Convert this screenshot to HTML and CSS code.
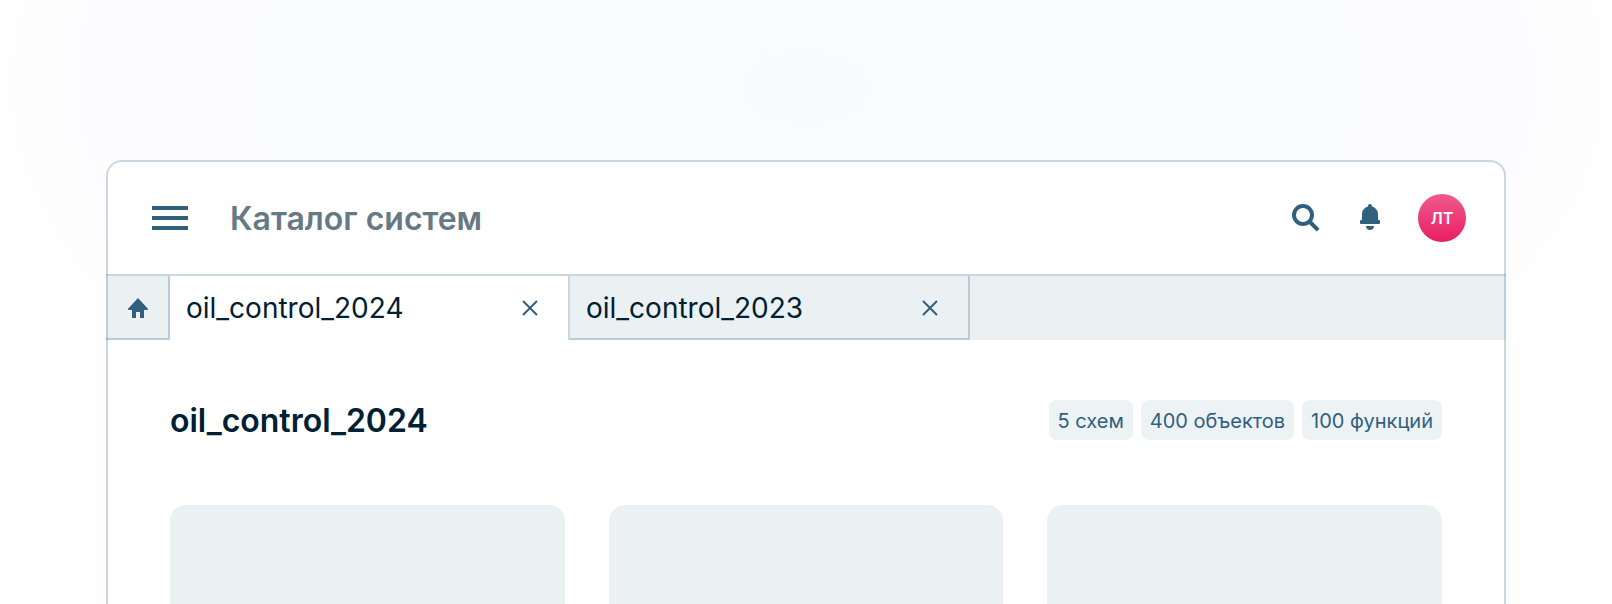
FILE: index.html
```html
<!DOCTYPE html>
<html lang="ru">
<head>
<meta charset="utf-8">
<meta name="viewport" content="width=device-width, initial-scale=1">
<title>Каталог систем</title>
<link rel="stylesheet" href="styles.css">
</head>
<body>
<div class="window">
  <header class="header">
    <button class="icon-button" type="button" aria-label="Меню">
      <svg width="36" height="24" viewBox="0 0 36 24" fill="currentColor"><path d="M0 0h36v4H0zM0 10h36v4H0zM0 20h36v4H0z"/></svg>
    </button>
    <h1 class="title">Каталог систем</h1>
    <div class="actions">
      <button class="icon-button" type="button" aria-label="Поиск">
        <svg width="30" height="28" viewBox="0 0 30 28" fill="none" stroke="currentColor" stroke-width="4"><circle cx="11" cy="11" r="9"/><path d="M17.500 17.500l8.600 8.600"/></svg>
      </button>
      <button class="icon-button" type="button" aria-label="Уведомления">
        <svg width="20" height="28" viewBox="0 0 20 28" fill="currentColor"><path d="M10 0c1.200 0 2 .8 2 2v.4c3.500 1 6 4 6 7.600v6h.7c.8 0 1.300.5 1.300 1.200v1.500c0 .8-.5 1.300-1.300 1.300H1.300C.5 20 0 19.500 0 18.700v-1.500C0 16.500.5 16 1.300 16H2v-6c0-3.600 2.500-6.600 6-7.600V2c0-1.200.8-2 2-2zM6 22h8c0 2.400-1.700 4-4 4s-4-1.600-4-4z"/></svg>
      </button>
      <button class="avatar" type="button">ЛТ</button>
    </div>
  </header>
  <nav class="tabs">
    <button class="home" type="button" aria-label="Главная">
      <svg width="20" height="20" viewBox="0 0 20 20" fill="currentColor"><path d="M10 0l9.700 10.400c.6.700.2 1.600-.6 1.600H16v8h-4v-6H8v6H4v-8H.9c-.8 0-1.200-.9-.6-1.600z"/></svg>
    </button>
    <div class="tab tab-active">
      <a class="tab-link" href="#2024">oil_control_2024</a>
      <button class="icon-button" type="button" aria-label="Закрыть oil_control_2024">
        <svg width="16" height="16" viewBox="0 0 16 16" stroke="currentColor" stroke-width="2"><path d="M1 1l14 14M15 1L1 15"/></svg>
      </button>
    </div>
    <div class="tab">
      <a class="tab-link" href="#2023">oil_control_2023</a>
      <button class="icon-button" type="button" aria-label="Закрыть oil_control_2023">
        <svg width="16" height="16" viewBox="0 0 16 16" stroke="currentColor" stroke-width="2"><path d="M1 1l14 14M15 1L1 15"/></svg>
      </button>
    </div>
    <div class="tabs-rest"></div>
  </nav>
  <main class="content" id="2024">
    <div class="summary">
      <h2 class="name">oil_control_2024</h2>
      <div class="tags">
        <span class="tag">5 схем</span>
        <span class="tag">400 объектов</span>
        <span class="tag">100 функций</span>
      </div>
    </div>
    <div class="cards">
      <div class="card"></div>
      <div class="card"></div>
      <div class="card"></div>
    </div>
  </main>
</div>
</body>
</html>
```

FILE: styles.css
```css
* {
  box-sizing: border-box;
}

body {
  --accent: #30607e;
  --line: rgba(48, 96, 126, 0.25);
  --fill: rgba(55, 105, 135, 0.1);
  display: flex;
  flex-direction: column;
  height: 100vh;
  margin: 0;
  padding: 160px 106px 0;
  overflow: hidden;
  background: radial-gradient(ellipse 54% 80% at 50% 14%, #f9fafb 0%, #fafbfc 40%, #fcfcfe 75%, #fefefe 100%);
  color: #002033;
  font-family: Inter, "Liberation Sans", sans-serif;
}

button {
  padding: 0;
  border: 0;
  background: none;
  color: var(--accent);
  font: inherit;
  cursor: pointer;
}

svg {
  display: block;
}

.window {
  display: flex;
  flex: 1;
  flex-direction: column;
  border: 2px solid #cbd8e1;
  border-bottom: 0;
  border-radius: 16px 16px 0 0;
  background: #fff;
  background-clip: padding-box;
}

.header {
  display: flex;
  align-items: center;
  margin: 0 -2px;
  padding: 32px 40px 32px 46px;
  border-bottom: 2px solid var(--line);
}

.title {
  margin: 0 0 0 42px;
  padding-top: 2px;
  color: #667985;
  font-size: 32px;
  font-weight: 600;
  line-height: 46px;
}

.actions {
  display: flex;
  gap: 38px;
  align-items: center;
  margin-left: auto;
}

.avatar {
  width: 48px;
  height: 48px;
  border-radius: 50%;
  background: linear-gradient(#f05a8c, #e91e63);
  color: #fff;
  font-size: 16px;
  font-weight: 600;
}

.tabs {
  display: flex;
  height: 64px;
  margin: 0 -2px;
}

.home,
.tab {
  display: flex;
  align-items: center;
  border: solid var(--line);
  border-width: 0 2px 2px 0;
  background: var(--fill);
}

.home {
  justify-content: center;
  width: 64px;
  padding: 2px 0 0 2px;
}

.tab {
  justify-content: space-between;
  width: 400px;
  padding: 2px 30px 0 16px;
}

.tab-active {
  padding-bottom: 2px;
  border-bottom-width: 0;
  background: none;
}

.tab-link {
  color: inherit;
  font-size: 28px;
  line-height: 40px;
  text-decoration: none;
}

.tabs-rest {
  flex: 1;
  background: var(--fill);
}

.content {
  display: flex;
  flex: 1;
  flex-direction: column;
  gap: 65px;
  padding: 60px 62px 0;
}

.summary {
  display: flex;
  align-items: center;
  justify-content: space-between;
}

.name {
  margin: 0;
  padding-top: 2px;
  font-size: 32px;
  font-weight: 600;
  line-height: 38px;
}

.tags {
  display: flex;
  gap: 8px;
}

.tag {
  padding: 2px 9px 0;
  border-radius: 8px;
  background: #edf2f5;
  color: var(--accent);
  font-size: 20px;
  line-height: 38px;
}

.cards {
  display: grid;
  flex: 1;
  grid-template-columns: repeat(3, 1fr);
  gap: 44px;
}

.card {
  border-radius: 16px 16px 0 0;
  background: #ebf0f3;
}
```
